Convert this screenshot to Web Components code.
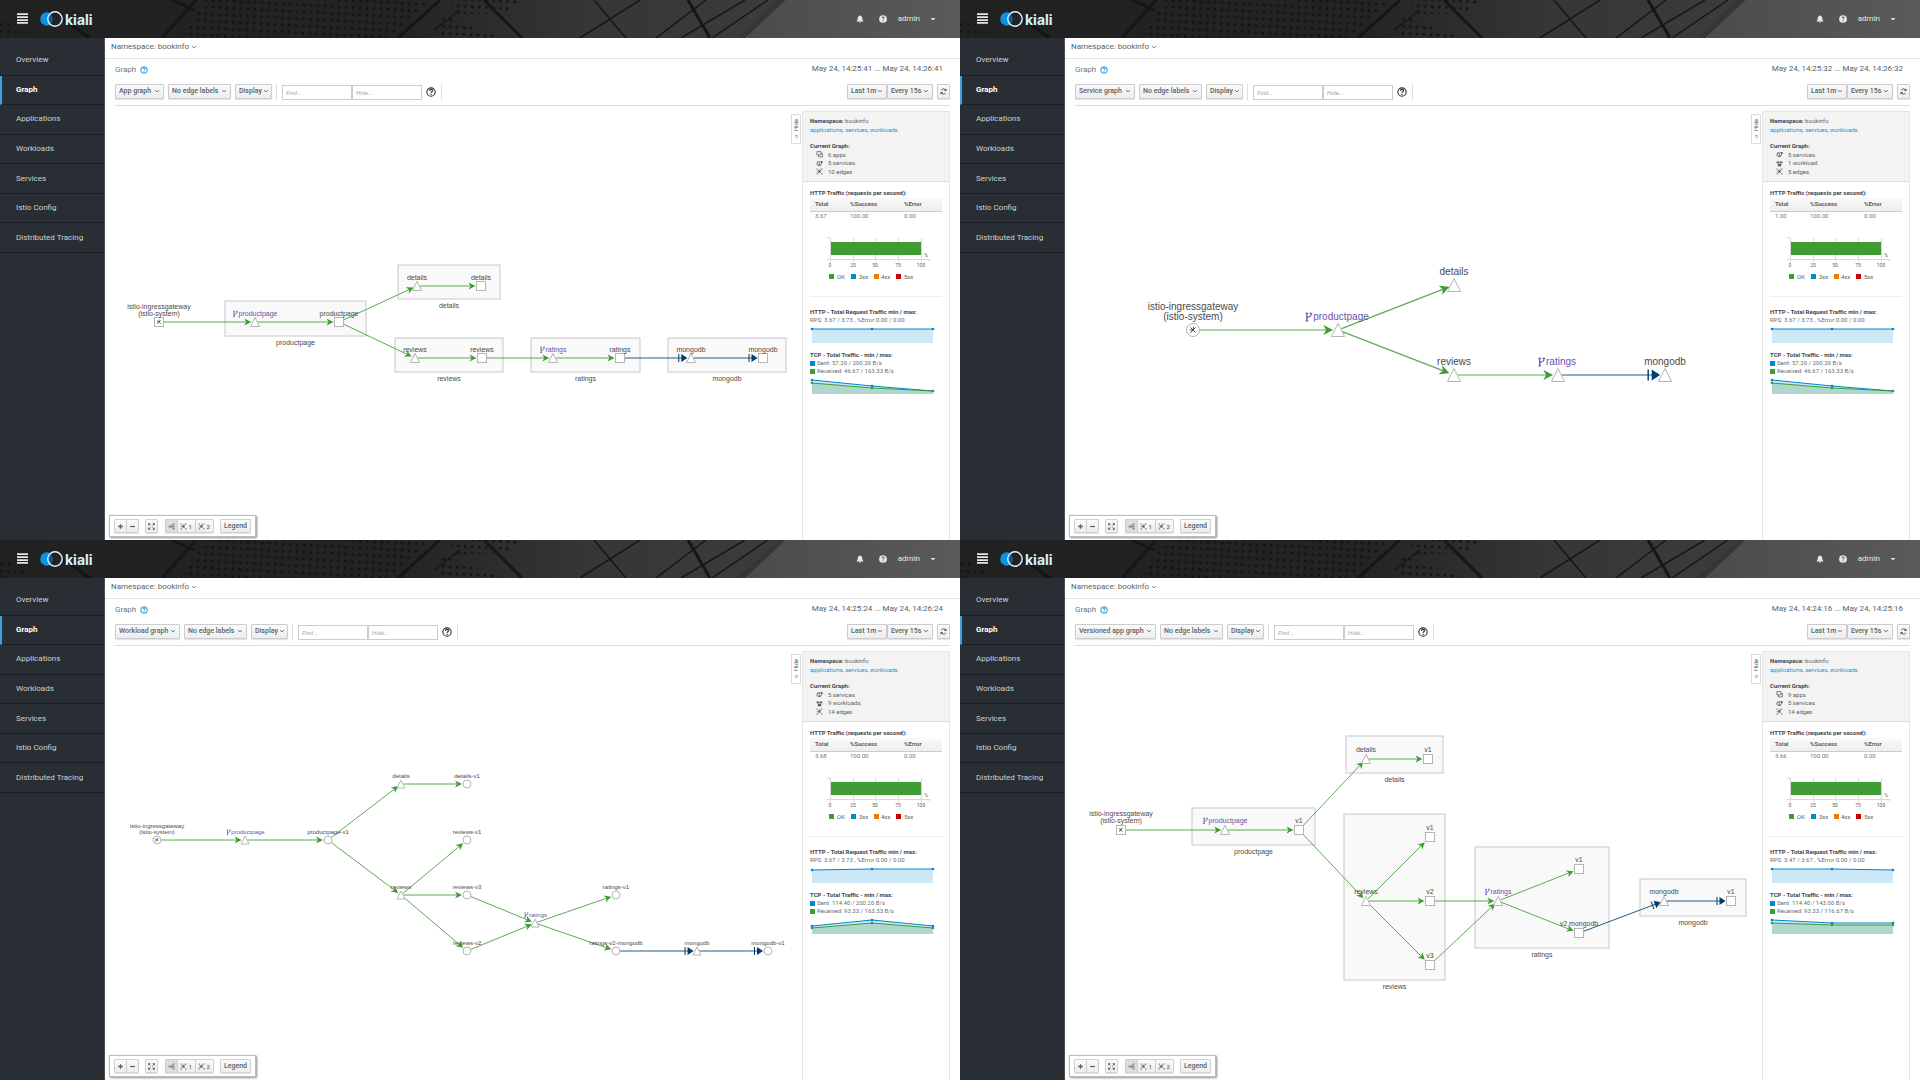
<!DOCTYPE html>
<html lang="en">
<head>
<meta charset="utf-8">
<title>Kiali graph types</title>
<style>
html,body{margin:0;height:100%}
body{display:grid;grid-template-columns:1fr 1fr;grid-template-rows:1fr 1fr;min-height:100vh;background:#fff;font-family:Roboto,"Liberation Sans",sans-serif;font-size:8px;color:#4d5258}
</style>
</head>
<body>
<kiali-console view="app"></kiali-console>
<kiali-console view="service"></kiali-console>
<kiali-console view="workload"></kiali-console>
<kiali-console view="versioned"></kiali-console>
<script>
const VIEWS = {
  app: {
    type:'App graph', typeWidth:49, range:'May 24, 14:25:41 ... May 24, 14:26:41',
    counts:[['apps','6 apps'],['services','5 services'],['edges','10 edges']],
    total:'3.67', rps:'RPS: 3.67 / 3.73 , %Error 0.00 / 0.00',
    sent:'Sent: 57.20 / 200.20 B/s', received:'Received: 46.67 / 163.33 B/s',
    http:[5,5,5], tcp:[[5,11,16],[8,13,16]],
    graph:{font:7, r:4.5, line:7, lift:9,
      boxes:[[225,301,141,35,'productpage'],[398,265,102,34,'details'],[395,338,108,34,'reviews'],[531,338,109,34,'ratings'],[668,338,118,34,'mongodb']],
      nodes:{gw:['sq',159,322,'istio-ingressgateway|(istio-system)'],pt:['tri',255,322,'productpage',1],ps:['sq',339,322,'productpage'],dt:['tri',417,286,'details'],ds:['sq',481,286,'details'],rt:['tri',415,358,'reviews'],rs:['sq',482,358,'reviews'],at:['tri',553,358,'ratings',1],as:['sq',620,358,'ratings'],mt:['tri',691,358,'mongodb'],ms:['sq',763,358,'mongodb']},
      edges:['gw pt','pt ps','ps dt','dt ds','ps rt','rt rs','rs at','at as','as mt tcp','mt ms tcp']}
  },
  service: {
    type:'Service graph', typeWidth:60, range:'May 24, 14:25:32 ... May 24, 14:26:32',
    counts:[['services','5 services'],['workloads','1 workload'],['edges','5 edges']],
    total:'1.00', rps:'RPS: 3.67 / 3.73 , %Error 0.00 / 0.00',
    sent:'Sent: 57.20 / 200.20 B/s', received:'Received: 46.67 / 163.33 B/s',
    http:[5,5,5], tcp:[[5,11,16],[8,13,16]],
    graph:{font:10, r:6.5, line:10, lift:13, boxes:[],
      nodes:{gw:['ci',233,330,'istio-ingressgateway|(istio-system)'],pt:['tri',378,330,'productpage',1],dt:['tri',494,285,'details'],rt:['tri',494,375,'reviews'],at:['tri',598,375,'ratings',1],mt:['tri',705,375,'mongodb']},
      edges:['gw pt','pt dt','pt rt','rt at','at mt tcp']}
  },
  workload: {
    type:'Workload graph', typeWidth:65, range:'May 24, 14:25:24 ... May 24, 14:26:24',
    counts:[['services','5 services'],['workloads','9 workloads'],['edges','14 edges']],
    total:'3.68', rps:'RPS: 3.67 / 3.73 , %Error 0.00 / 0.00',
    sent:'Sent: 114.40 / 200.20 B/s', received:'Received: 93.33 / 163.33 B/s',
    http:[6,5,5], tcp:[[11,5,11],[13,8,13]],
    graph:{font:6, r:4, line:6, lift:8, boxes:[],
      nodes:{gw:['ci',157,300,'istio-ingressgateway|(istio-system)'],pt:['tri',245,300,'productpage',1],pw:['ci',328,300,'productpage-v1'],dt:['tri',401,244,'details'],dw:['ci',467,244,'details-v1'],r1:['ci',467,300,'reviews-v1'],rt:['tri',401,355,'reviews'],r3:['ci',467,355,'reviews-v3'],r2:['ci',467,411,'reviews-v2'],at:['tri',535,383,'ratings',1],a1:['ci',616,355,'ratings-v1'],a2:['ci',616,411,'ratings-v2-mongodb'],mt:['tri',697,411,'mongodb'],m1:['ci',768,411,'mongodb-v1']},
      edges:['gw pt','pt pw','pw dt','dt dw','pw rt','rt r1','rt r3','rt r2','r3 at','r2 at','at a1','at a2','a2 mt tcp','mt m1 tcp']}
  },
  versioned: {
    type:'Versioned app graph', typeWidth:81, range:'May 24, 14:24:16 ... May 24, 14:25:16',
    counts:[['apps','9 apps'],['services','5 services'],['edges','14 edges']],
    total:'3.66', rps:'RPS: 3.47 / 3.67 , %Error 0.00 / 0.00',
    sent:'Sent: 114.40 / 143.00 B/s', received:'Received: 93.33 / 116.67 B/s',
    http:[5,5,6], tcp:[[5,8,8],[8,10,10]],
    graph:{font:7, r:4.5, line:7, lift:10,
      boxes:[[232,268,123,37,'productpage'],[386,196,97,37,'details'],[384,274,101,166,'reviews'],[515,307,134,101,'ratings'],[680,339,106,37,'mongodb']],
      nodes:{gw:['sq',161,290,'istio-ingressgateway|(istio-system)'],pt:['tri',265,290,'productpage',1],p1:['sq',339,290,'v1'],dt:['tri',406,219,'details'],d1:['sq',468,219,'v1'],rt:['tri',406,361,'reviews'],r1:['sq',470,297,'v1'],r2:['sq',470,361,'v2'],r3:['sq',470,425,'v3'],at:['tri',538,361,'ratings',1],a1:['sq',619,329,'v1'],a2:['sq',619,393,'v2 mongodb'],mt:['tri',704,361,'mongodb'],m1:['sq',771,361,'v1']},
      edges:['gw pt','pt p1','p1 dt','dt d1','p1 rt','rt r1','rt r2','rt r3','r2 at','r3 at','at a1','at a2','a2 mt tcp','mt m1 tcp']}
  }
};

const HELP='<path d="M4.200 4.600c.1-1.300 1-1.800 1.900-1.800 1 0 1.800.6 1.800 1.500 0 1.300-1.800 1.300-1.800 2.700M6.100 8.200v1.300" ';
const ICONS = {
  plus:'<path d="M6 2v8M2 6h8" stroke-width="2.200"/>',
  minus:'<path d="M2 6h8" stroke-width="2.200"/>',
  fit:'<path d="M1 4V1h3M8 1h3v3M11 8v3H8M4 11H1V8M1.500 1.500l3 3M10.500 1.500l-3 3M10.500 10.500l-3-3M1.500 10.500l3-3" stroke-width="1.500"/>',
  tree:'<path d="M10 2L3 6l7 4M5 6h5" stroke-width="1.300"/><circle cx="2.500" cy="6" r="1.400"/><path d="M9 1h2v2H9zM9 9h2v2H9zM9 5h2v2H9z" stroke-width=".8"/>',
  edges:'<path d="M6 6L2 2M6 6l4-4M6 6L2 10.500M6 6l4 4M6 6l-5 .5M6 6l1-5" stroke-width="1"/><circle cx="6" cy="6" r="1.300" fill="currentColor"/><path d="M1 1h1.600v1.600H1zM9.400 1H11v1.600H9.400zM1 9.500h1.600v1.600H1zM9.500 9.500h1.600v1.600H9.500z" fill="currentColor" stroke="none"/>',
  apps:'<path d="M1.500 1h7v5.500h-7zM4 6.500v3.500h7V4H8.500" stroke-width="1.300"/>',
  services:'<ellipse cx="5.500" cy="6" rx="4.500" ry="2.800" transform="rotate(-15 5.500 6)" stroke-width="1.200"/><path d="M5.500 3.500v5M3.500 9.500h5" stroke-width="1.300"/><circle cx="10" cy="3.500" r="1.700" fill="currentColor" stroke="none"/><circle cx="3" cy="3" r="1" fill="currentColor" stroke="none"/>',
  workloads:'<path d="M1 2.500h4.500v3H1zM6.500 2.500H11v3H6.500zM3 6.500h6v4H3z" fill="currentColor" stroke="none"/>',
  chevron:'<path d="M2 4l4 4 4-4" stroke-width="1.500"/>',
  caret:'<path d="M1.500 4h9L6 9z" fill="currentColor" stroke="none"/>',
  refresh:'<path d="M10.300 5A4.500 4.500 0 0 0 2 3.800M1.700 7A4.500 4.500 0 0 0 10 8.200" stroke-width="1.700"/><path d="M11 1v4.200H6.800zM1 11V6.800h4.200z" fill="currentColor" stroke="none"/>',
  help:'<circle cx="6" cy="6" r="5" stroke-width="1.300"/>'+HELP+'stroke-width="1.400"/>',
  helpfill:'<circle cx="6" cy="6" r="5.800" fill="currentColor" stroke="none"/>'+HELP+'stroke="#505050" stroke-width="1.500"/>',
  bell:'<path d="M6 .5c.6 0 .9.400.9.900C8.600 1.800 9.500 3.200 9.500 5c0 2.500.7 3.300 1.500 4v.8H1V9c.8-.7 1.500-1.500 1.500-4 0-1.800.9-3.200 2.600-3.600 0-.5.300-.9.900-.9zM4.700 10.300h2.600c0 .8-.5 1.400-1.300 1.400s-1.300-.6-1.300-1.400z" fill="currentColor" stroke="none"/>',
  bars:'<path d="M0 1.300h12M0 4.500h12M0 7.700h12M0 10.900h12" stroke-width="1.900"/>',
  double:'<path d="M3 2l3 3 3-3M3 6l3 3 3-3" stroke-width="1.500"/>'
};

function define(name, css, build){
  customElements.define(name, class extends HTMLElement{
    constructor(){ super(); this.attachShadow({mode:'open'}); }
    connectedCallback(){
      const t=document.createElement('template');
      t.innerHTML='<style>*{box-sizing:border-box}'+css+'</style>'+build(this);
      this.shadowRoot.append(t.content.cloneNode(true));
    }
  });
}

define('kiali-icon',':host{display:inline-flex;width:8px;height:8px;flex:none}svg{width:100%;height:100%;fill:none;stroke:currentColor}',
  el=>'<svg viewBox="0 0 12 12" aria-hidden="true">'+ICONS[el.getAttribute('name')]+'</svg>');

/* Drop-down in the toolbar: a select, or a menu button when "menu" is set */
define('kiali-dropdown',`
:host{display:block;position:relative;height:15px;width:var(--w)}
select,button{appearance:none;display:block;width:100%;height:100%;margin:0;padding:0 0 1px 3px;border:1px solid #ccc;border-radius:1px;background:linear-gradient(#fafafa,#ededed);box-shadow:0 1px 1px rgba(3,3,3,.12);font:500 7px/10px Roboto,sans-serif;color:#5a5f65;text-align:left}
kiali-icon{position:absolute;right:4px;top:4px;width:6px;height:6px;pointer-events:none}
:host([menu]) kiali-icon{right:3px}`,
  el=>{const t=el.getAttribute('text'),l=el.getAttribute('label');
    return (el.hasAttribute('menu')?`<button type="button" aria-haspopup="true">${t}</button>`:`<select aria-label="${l}"><option>${t}</option></select>`)+'<kiali-icon name="chevron"></kiali-icon>';});

define('kiali-masthead',`
:host{display:flex;position:relative;height:38px;background:#222;color:#e8e8e8;align-items:center;padding:0 24px 1px 17px;overflow:hidden}
.art{position:absolute;inset:0;width:100%;height:100%}
button{appearance:none;background:none;border:0;padding:0;margin:0;color:inherit;font:8px/10px Roboto,sans-serif;display:flex;align-items:center;position:relative}
.menu kiali-icon{width:11px;height:11px}
.brand{display:flex;align-items:center;position:relative;margin-left:12px;color:#d7f2fc;font:700 14px/20px Inter,sans-serif;gap:2px;text-decoration:none}
.brand svg{width:23px;height:18px}
.brand span{padding-top:2px}
.tools{display:flex;align-items:center;margin-left:auto;position:relative}
.tools button+button{margin-left:15px}
.tools .user{margin-left:11px!important;gap:10px}
.user kiali-icon{width:6px;height:6px}`,()=>`
<svg class="art" viewBox="0 0 960 38" preserveAspectRatio="xMaxYMid slice" aria-hidden="true">
<defs><pattern id="d" width="7" height="7" patternUnits="userSpaceOnUse" patternTransform="rotate(3)"><circle cx="3" cy="3" r="1.500" fill="#131313"/></pattern>
<linearGradient id="a"><stop offset="0" stop-color="#212121"/><stop offset=".5" stop-color="#232323"/><stop offset=".75" stop-color="#363636"/><stop offset="1" stop-color="#3c3c3c"/></linearGradient>
<linearGradient id="b"><stop offset="0" stop-color="#4b4b4b"/><stop offset="1" stop-color="#5a5a5a"/></linearGradient></defs>
<path fill="url(#a)" d="M0 0h790v38H0z"/>
<path fill="url(#d)" d="M205 0h225l-40 38H180zM0 18l40 20H0zM450 0h72l-18 14h-50zM440 14l60 24h-60z"/>
<g stroke="#161616" fill="none"><path stroke-width="3" d="M58 16l32 22M196 0l-34 38M172 0l22 10M440 0l-42 38M484 0l38 38M688 0l22 38"/><path stroke-width="1.500" d="M594 0l32 38M640 0l-60 38M706 0l-50 38M745 0l-64 38M768 0l-56 38M460 10l-26 20"/></g>
<path fill="url(#b)" d="M786 0h174v38H745z"/>
<path stroke="#222" stroke-width="5" stroke-dasharray="1 2" d="M781 0l-40 38" opacity=".5"/></svg>
<button class="menu" type="button" aria-label="Toggle navigation"><kiali-icon name="bars"></kiali-icon></button>
<a class="brand" href="#"><svg viewBox="0 0 23 18" aria-hidden="true"><circle cx="7" cy="9" r="6.800" fill="#0a93e2"/><circle cx="15" cy="9" r="7" fill="#222"/><path d="M10.500 3.800a7 7 0 0 1 0 10.400a7 7 0 0 1 0-10.400z" fill="#0b5c9e"/><circle cx="15" cy="9" r="7.200" fill="none" stroke="#d7f2fc" stroke-width="1.500"/></svg><span>kiali</span></a>
<div class="tools"><button type="button" aria-label="Notifications"><kiali-icon name="bell"></kiali-icon></button><button type="button" aria-label="Help"><kiali-icon name="helpfill"></kiali-icon></button><button type="button" class="user">admin<kiali-icon name="caret"></kiali-icon></button></div>`);

define('kiali-nav',`
:host{display:block;width:105px;background:#292e34;border-right:1px solid #4a4d52;padding-top:8px}
nav{display:grid;height:207px;grid-auto-rows:1fr}
a{display:flex;align-items:center;padding-left:16px;font-size:8px;line-height:10px;color:#d1d1d1;text-decoration:none;border-bottom:1px solid #1a1d21}
a[aria-current]{color:#fff;font-weight:700;border-left:2px solid #39a5dc;padding-left:14px}`,
()=>'<nav>'+['Overview','Graph','Applications','Workloads','Services','Istio Config','Distributed Tracing'].map(t=>`<a href="#"${t==='Graph'?' aria-current="page"':''}>${t}</a>`).join('')+'</nav>');

define('kiali-toolbar',`
:host{display:flex;align-items:center;height:22px;border-bottom:1px solid #ddd;padding-bottom:6px;gap:4px}
i{width:1px;height:16px;background:#ddd}
.find{display:flex;margin:1px 0 0 1px}
input{appearance:none;width:70px;height:15px;margin:0;padding:0 3px;border:1px solid #ccc;border-radius:0;font:italic 6px/9px Roboto,sans-serif;background:#fff}
input::placeholder{color:#a4a4a4;opacity:1}
button{appearance:none;display:flex;align-items:center;justify-content:center;background:none;border:0;padding:0;margin:0;color:#4d5258}
.help{width:10px;height:10px;margin:0 1px 0 0;color:#292e34}
.help kiali-icon{width:10px;height:10px}
.right{display:flex;margin-left:auto}
.refresh{width:13px;height:15px;margin-left:4px;border:1px solid #ccc;border-radius:1px;background:linear-gradient(#fafafa,#ededed);box-shadow:0 1px 1px rgba(3,3,3,.12)}
.refresh kiali-icon{width:7px;height:7px}`,el=>{const v=VIEWS[el.getAttribute('view')];return `
<kiali-dropdown label="Graph type" text="${v.type}" style="--w:${v.typeWidth}px"></kiali-dropdown>
<kiali-dropdown label="Edge labels" text="No edge labels" style="--w:63px"></kiali-dropdown>
<kiali-dropdown menu text="Display" style="--w:37px"></kiali-dropdown><i></i>
<div class="find"><input type="text" placeholder="Find..." aria-label="Find"><input type="text" placeholder="Hide..." aria-label="Hide"></div>
<button class="help" type="button" aria-label="Find help"><kiali-icon name="help"></kiali-icon></button><i></i>
<div class="right"><kiali-dropdown label="Duration" text="Last 1m" style="--w:40px"></kiali-dropdown><kiali-dropdown label="Refresh interval" text="Every 15s" style="--w:46px"></kiali-dropdown><button class="refresh" type="button" aria-label="Refresh"><kiali-icon name="refresh"></kiali-icon></button></div>`});

const MARK='M6 6L2 2M6 6l4-4M6 6L2 10.500M6 6l4 4M6 6H1M6 6l1-5';
function drawGraph(g){
  const G='#3f9c35',B='#003f6b',r=g.r,out=[];
  for(const [x,y,w,h,t] of g.boxes)
    out.push(`<rect x="${x}" y="${y}" width="${w}" height="${h}" fill="#f9f9f9" stroke="#c8c8c8"/><text x="${x+w/2}" y="${y+h+g.font+2}">${t}</text>`);
  for(const e of g.edges){
    const [a,b,tcp]=e.split(' '),p=g.nodes[a],q=g.nodes[b];
    const dx=q[1]-p[1],dy=q[2]-p[2],L=Math.hypot(dx,dy),ux=dx/L,uy=dy/L;
    const rad=n=>n[0]==='ci'?r:n[0]==='tri'?r*.6:r/Math.max(Math.abs(ux),Math.abs(uy));
    const s=r>5?1.400:1,r0=rad(p),r1=rad(q)+1,x0=p[1]+ux*r0,y0=p[2]+uy*r0,x1=q[1]-ux*r1,y1=q[2]-uy*r1;
    const c=tcp?B:G,ang=Math.atan2(dy,dx)*180/Math.PI;
    out.push(`<path d="M${x0} ${y0}L${x1-ux*3} ${y1-uy*3}" stroke="${c}" stroke-width="${r>5?1.200:1}" opacity=".85" fill="none"/>`);
    out.push(`<path transform="translate(${x1} ${y1}) rotate(${ang}) scale(${s})" fill="${c}" d="${tcp?'M0 0L-6-4V4zM-9-4h1v8h-1z':'M0 0L-7-3.500L-5 0L-7 3.500z'}"/>`);
  }
  for(const k in g.nodes){
    const [s,x,y,label,vs]=g.nodes[k],a='fill="#fff" stroke="#b5b5b5"';
    out.push(s==='sq'?`<rect x="${x-r}" y="${y-r}" width="${r*2}" height="${r*2}" ${a}/>`:s==='ci'?`<circle cx="${x}" cy="${y}" r="${r}" ${a}/>`:`<path d="M${x} ${y-r}L${x+r} ${y+r}H${x-r}z" ${a}/>`);
    if(k==='gw') out.push(`<path transform="translate(${x-r*.6} ${y-r*.6}) scale(${r/10})" d="${MARK}" stroke="#333" stroke-width="1.300" fill="none"/>`);
    const base=y-g.lift+Math.round(g.font*.36)+(g.font>9?-1:0);
    if(vs){
      const h=g.font,tx=x+3,w={productpage:5.56,ratings:3}[label]*h,ix=tx-w/2-h*.8;
      out.push(`<text class="vs" x="${tx}" y="${base}">${label}</text>`);
      out.push(`<path transform="translate(${ix} ${base-h*.8}) scale(${h/12})" d="M2 1.500v9M7 2v1.500C7 6 2 5.500 2 8M.5 1.500h3M.5 10.500h3M5.500 1.500h3" stroke="#6753ac" stroke-width="1.500" fill="none"/>`);
    } else label.split('|').forEach((t,i,all)=>out.push(`<text x="${x}" y="${base-(all.length-1-i)*g.line}">${t}</text>`));
  }
  return out.join('');
}

define('kiali-graph',`
:host{display:block;position:relative;flex:1;min-width:0}
svg{display:block;width:100%;height:100%}
text{font-family:"Liberation Sans",sans-serif;text-anchor:middle;fill:#4a4a4a}
.vs{fill:#6753ac}
.tools{position:absolute;left:4px;bottom:3px;display:flex;gap:4px;padding:3px 4px;background:#fff;border:1px solid #bbb;box-shadow:1px 1px 2px rgba(0,0,0,.45);height:22px;width:147px;justify-content:space-between}
.tools div{display:flex}
button{appearance:none;display:flex;align-items:center;justify-content:center;height:14px;min-width:13px;margin:0;padding:0 2px;border:1px solid #d0d0d0;border-radius:1px;background:linear-gradient(#fafafa,#ededed);box-shadow:0 1px 1px rgba(3,3,3,.1);font:500 7px/9px Roboto,sans-serif;color:#5a5f65;gap:1px}
div button+button{margin-left:-1px}
kiali-icon{width:7px;height:7px}
button[aria-pressed]{background:#ddd;color:#72767b}
.n{font-size:6px;width:19px}
.l{width:31px;font-size:7px}`,el=>{const g=VIEWS[el.getAttribute('view')].graph;return `
<svg viewBox="105 106 697 434" role="img" aria-label="Service mesh graph" font-size="${g.font}">${drawGraph(g)}</svg>
<div class="tools"><div><button type="button" aria-label="Zoom in"><kiali-icon name="plus"></kiali-icon></button><button type="button" aria-label="Zoom out"><kiali-icon name="minus"></kiali-icon></button></div>
<button type="button" aria-label="Fit"><kiali-icon name="fit"></kiali-icon></button>
<div><button type="button" aria-pressed="true" aria-label="Layout default"><kiali-icon name="tree"></kiali-icon></button><button class="n" type="button"><kiali-icon name="edges"></kiali-icon>1</button><button class="n" type="button"><kiali-icon name="edges"></kiali-icon>2</button></div>
<button class="l" type="button">Legend</button></div>`});

function spark(series){
  const X=[2,62,123];
  return '<svg class="spark" viewBox="0 0 132 22" aria-hidden="true">'+series.map(([c,ys])=>{
    const pts=ys.map((y,i)=>X[i]+' '+y);
    return `<path d="M${pts.join('L')}L123 19H2z" fill="${c}" opacity=".2"/><path d="M${pts.join('L')}" fill="none" stroke="${c}"/>`+ys.map((y,i)=>`<circle cx="${X[i]}" cy="${y}" r="1.300" fill="${c}"/>`).join('');
  }).join('')+'</svg>';
}

define('kiali-summary',`
:host{display:block;position:relative;width:148px;margin-top:5px;border:solid #e6e6e6;border-width:1px 1px 0;font-size:6px;line-height:8px;color:#5a5f65}
header{display:grid;height:70px;padding:5px 7px 5px;grid-auto-rows:1fr;background:#f3f3f3;border-bottom:1px solid #ddd;align-items:center}
a{color:#2b8fd0;text-decoration:none}
b{color:#424549;font-weight:700}
.c{display:flex;align-items:center;padding-left:6px;gap:5px}
.c kiali-icon{width:7px;height:7px}
.tab{appearance:none;position:absolute;left:-12px;top:2px;width:10px;height:30px;margin:0;padding:0;border:1px solid #ddd;background:#fff;font:6px/8px Roboto,sans-serif;color:#4d5258;display:flex;flex-direction:column;align-items:center;justify-content:center;gap:2px}
.tab span{writing-mode:vertical-rl;transform:rotate(180deg)}
.tab kiali-icon{width:5px;height:5px}
section{padding:7px 7px 0}
section>b,section>span{display:flex;align-items:center;height:8px;white-space:nowrap}
table{width:100%;margin-top:1px;border-collapse:collapse;table-layout:fixed}
th,td{padding:0 0 0 5px;height:13px;text-align:left;line-height:8px}
th{background:linear-gradient(#fafafa,#ededed);border-bottom:1px solid #ccc;font-weight:700}
td{height:10px;color:#72767b}
th:nth-child(1){width:35px}th:nth-child(2){width:54px}
svg{display:block;width:100%}
text{font-size:6px;fill:#5a5f65}
.m{text-anchor:middle;font-size:5px}
hr{border:0;border-top:1px solid #eee;margin:15px 0 10px}
section>b.t{height:9px}
section>b.g{margin-top:4px}
section>span{color:#6a6e73;gap:2px}
span i{width:5px;height:5px;background:#0088ce}
span i.r{background:#3f9c35}`,el=>{const v=VIEWS[el.getAttribute('view')];return `
<button class="tab" type="button"><span>Hide</span><kiali-icon name="double"></kiali-icon></button>
<header><div><b>Namespace:</b> bookinfo</div><div><a href="#">applications</a>, <a href="#">services</a>, <a href="#">workloads</a></div><div></div><div><b>Current Graph:</b></div>
${v.counts.map(([i,t])=>`<div class="c"><kiali-icon name="${i}"></kiali-icon>${t}</div>`).join('')}</header>
<section><b>HTTP Traffic (requests per second):</b>
<table><thead><tr><th>Total</th><th>%Success</th><th>%Error</th></tr></thead><tbody><tr><td>${v.total}</td><td>100.00</td><td>0.00</td></tr></tbody></table>
<svg viewBox="0 0 132 60" role="img" aria-label="Response codes">
<path d="M17 17h4M20.500 17v21M43.500 17v21M65.500 17v21M88.500 17v21M111.500 17v21M17 38.500h103v2M20.500 38v3M43.500 38v3M65.500 38v3M88.500 38v3M111.500 38v3" stroke="#d8d8d8" fill="none"/>
<path d="M21 21h90v13H21z" fill="#3f9c35"/>
<text class="m" x="20" y="46">0</text><text class="m" x="43" y="46">25</text><text class="m" x="65" y="46">50</text><text class="m" x="88" y="46">75</text><text class="m" x="111" y="46">100</text><text class="m" x="116" y="36">%</text>
<path d="M19 53h5v5h-5z" fill="#3f9c35"/><text x="27" y="58">OK</text><path d="M41 53h5v5h-5z" fill="#0088ce"/><text x="49" y="58">3xx</text><path d="M64 53h5v5h-5z" fill="#ec7a08"/><text x="71" y="58">4xx</text><path d="M86 53h5v5h-5z" fill="#c00"/><text x="94" y="58">5xx</text></svg>
<hr><b class="t">HTTP - Total Request Traffic min / max:</b><span>${v.rps}</span>${spark([['#0088ce',v.http]])}
<b class="t g">TCP - Total Traffic - min / max:</b><span><i></i>${v.sent}</span><span><i class="r"></i>${v.received}</span>${spark([['#0088ce',v.tcp[0]],['#3f9c35',v.tcp[1]]])}
</section>`});

define('kiali-console',`
:host{display:flex;flex-direction:column;min-width:0;min-height:540px;background:#fff}
.body{display:flex;flex:1;min-height:0}
main{display:flex;flex-direction:column;flex:1;min-width:0}
.ns{display:flex;align-items:center;height:21px;padding:0 6px 2px;border-bottom:1px solid #e4e4e4}
button{appearance:none;display:flex;align-items:center;gap:2px;margin:0;padding:0;border:0;background:none;font:8px/10px Roboto,sans-serif;color:#5a5f65}
.ns kiali-icon{width:6px;height:6px}
.title{display:flex;align-items:center;height:25px;padding:0 17px 4px 10px;color:#72767b;line-height:10px}
h1{margin:0 4px 0 0;font-size:8px;font-weight:400}
.title button{color:#0088ce}
.title time{margin-left:auto;color:#5a5f65;padding-bottom:2px}
kiali-toolbar{margin:0 10px 0 10px}
.work{display:flex;flex:1;min-height:0;padding-right:10px}`,el=>{const k=el.getAttribute('view');return `
<kiali-masthead></kiali-masthead>
<div class="body"><kiali-nav></kiali-nav><main>
<div class="ns"><button type="button" aria-haspopup="true">Namespace: bookinfo <kiali-icon name="chevron"></kiali-icon></button></div>
<div class="title"><h1>Graph</h1><button type="button" aria-label="Graph help"><kiali-icon name="help"></kiali-icon></button><time>${VIEWS[k].range}</time></div>
<kiali-toolbar view="${k}"></kiali-toolbar>
<div class="work"><kiali-graph view="${k}"></kiali-graph><kiali-summary view="${k}"></kiali-summary></div>
</main></div>`});
</script>
</body>
</html>
